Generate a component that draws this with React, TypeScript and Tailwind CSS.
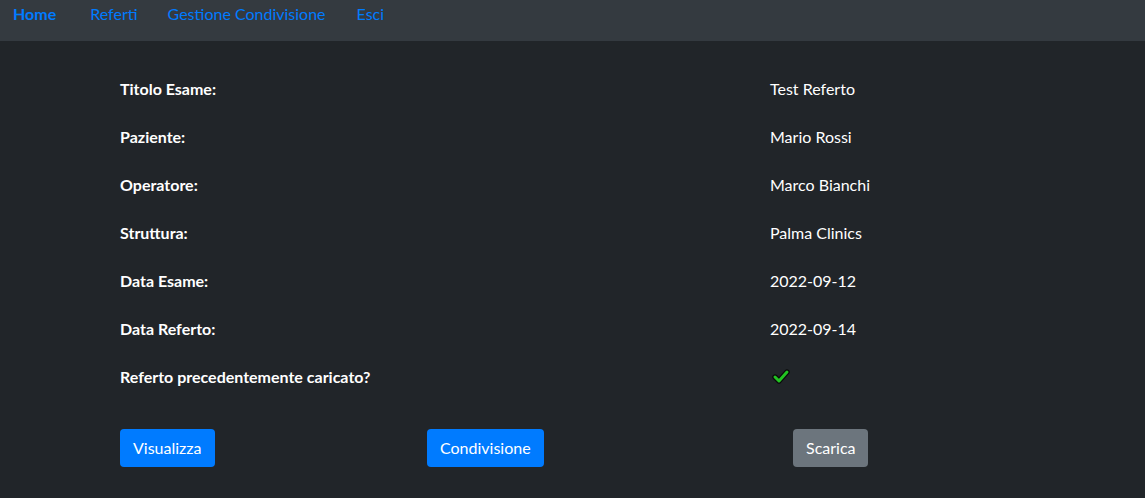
import React from "react";

const rows: [string, React.ReactNode][] = [
  ["Titolo Esame:", "Test Referto"],
  ["Paziente:", "Mario Rossi"],
  ["Operatore:", "Marco Bianchi"],
  ["Struttura:", "Palma Clinics"],
  ["Data Esame:", "2022-09-12"],
  ["Data Referto:", "2022-09-14"],
  [
    "Referto precedentemente caricato?",
    <svg key="c" width="18" height="16" viewBox="0 0 18 16" className="ml-[2px]">
      <polyline points="3,8 7,12 15,3" fill="none" stroke="#0a0a0a" strokeWidth="5.4" strokeLinecap="round" strokeLinejoin="round" />
      <polyline points="3,8 7,12 15,3" fill="none" stroke="#22c322" strokeWidth="3" strokeLinecap="round" strokeLinejoin="round" />
    </svg>,
  ],
];

export default function App() {
  return (
    <div className="min-h-[498px] bg-[#212529] text-white" style={{ fontFamily: "Lato, 'Liberation Sans', sans-serif" }}>
      <nav className="h-[41px] bg-[#343a40] flex items-start pl-[13px] text-[16px] leading-[28px]">
        <a className="font-bold text-[#007bff] mr-[34px]">Home</a>
        <a className="text-[#007bff] mr-[30px]">Referti</a>
        <a className="text-[#007bff] mr-[31px]">Gestione Condivisione</a>
        <a className="text-[#007bff]">Esci</a>
      </nav>
      <div className="pl-[120px] pt-[24px]">
        {rows.map(([l, v], i) => (
          <div key={i} className="grid grid-cols-[650px_auto] h-[48px] items-start text-[16px] leading-[48px]">
            <div className="font-bold">{l}</div>
            <div className="flex items-center h-[48px]">{v}</div>
          </div>
        ))}
        <div className="grid grid-cols-[307px_366px_auto] mt-[28px]">
          <div>
            <button className="h-[38px] px-[13px] rounded-[4px] bg-[#007bff] text-white text-[16px]">Visualizza</button>
          </div>
          <div>
            <button className="h-[38px] px-[13px] rounded-[4px] bg-[#007bff] text-white text-[16px]">Condivisione</button>
          </div>
          <div>
            <button className="h-[38px] px-[13px] rounded-[4px] bg-[#6c757d] text-white text-[16px]">Scarica</button>
          </div>
        </div>
      </div>
    </div>
  );
}
